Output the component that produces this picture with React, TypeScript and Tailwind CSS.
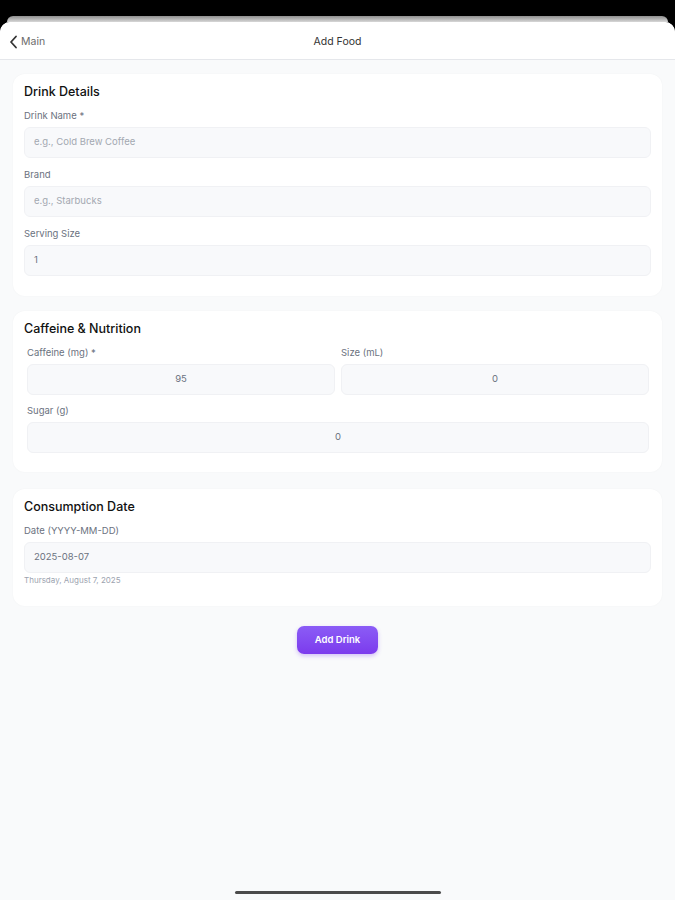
import React from "react";

function Field({ label, value, placeholder, center }: { label: string; value?: string; placeholder?: string; center?: boolean }) {
  return (
    <div className="flex flex-col">
      <div className="h-[12px] text-[9.5px] leading-[12px] text-[#6b7280] mb-[5px]">{label}</div>
      <div
        className={`h-[31px] rounded-[6px] bg-[#f8f9fb] border border-[#f0f1f4] flex items-center text-[9.5px] ${
          center ? "justify-center" : "px-[9px]"
        } ${value ? "text-[#6b7280]" : "text-[#a3a8b1]"}`}
      >
        {value ?? placeholder}
      </div>
    </div>
  );
}

function Card({ title, children, className }: { title: string; children: React.ReactNode; className?: string }) {
  return (
    <div className={`bg-white rounded-[12px] shadow-[0_0_2px_rgba(0,0,0,0.04)] pt-[10px] ${className ?? ""}`}>
      <div className="h-[16px] leading-[16px] text-[12.5px] font-medium text-[#111111] mb-[10px]">{title}</div>
      {children}
    </div>
  );
}

export default function App() {
  return (
    <div className="h-[900px] bg-black flex flex-col font-['Inter',sans-serif]">
      <div className="h-[16px] shrink-0" />
      <div className="mx-[7px] h-[6px] shrink-0 rounded-t-[10px] bg-gradient-to-b from-[#8f8f8f] to-[#d8d8d8]" />
      <div className="flex-1 bg-[#f9fafb] rounded-t-[10px] flex flex-col overflow-hidden">
        <div className="h-[38px] shrink-0 bg-white border-b border-[#e5e7eb] flex items-center relative pt-[2px]">
          <div className="flex items-center pl-[8px] gap-[2px]">
            <svg width="11" height="14" viewBox="0 0 11 14" fill="none">
              <path d="M8 1.5L3 7l5 5.5" stroke="#333333" strokeWidth="1.8" strokeLinecap="round" strokeLinejoin="round" />
            </svg>
            <span className="text-[10.5px] text-[#6b6b6b]">Main</span>
          </div>
          <div className="absolute left-0 right-0 text-center text-[10.5px] text-[#333333] pointer-events-none">Add Food</div>
        </div>

        <div className="flex flex-col px-[13px] pt-[14px]">
          <Card title="Drink Details" className="px-[11px] pb-[20px]">
            <div className="flex flex-col gap-[11px]">
              <Field label="Drink Name *" placeholder="e.g., Cold Brew Coffee" />
              <Field label="Brand" placeholder="e.g., Starbucks" />
              <Field label="Serving Size" value="1" />
            </div>
          </Card>

          <Card title="Caffeine & Nutrition" className="mt-[15px] pl-[11px] pr-[13px] pb-[19px]">
            <div className="flex flex-col gap-[10px] pl-[3px]">
              <div className="grid grid-cols-2 gap-[6px]">
                <Field label="Caffeine (mg) *" value="95" center />
                <Field label="Size (mL)" value="0" center />
              </div>
              <Field label="Sugar (g)" value="0" center />
            </div>
          </Card>

          <Card title="Consumption Date" className="mt-[17px] px-[11px] pb-[21px]">
            <Field label="Date (YYYY-MM-DD)" value="2025-08-07" />
            <div className="mt-[2px] text-[8px] leading-[10px] text-[#9ca3af]">Thursday, August 7, 2025</div>
          </Card>

          <div className="flex justify-center mt-[20px]">
            <button className="w-[81px] h-[28px] rounded-[7px] bg-gradient-to-b from-[#8b5cf6] to-[#7c3aed] text-white text-[9.5px] font-semibold shadow-[0_2px_4px_rgba(124,58,237,0.3)]">
              Add Drink
            </button>
          </div>
        </div>

        <div className="mt-auto flex justify-center pb-[6px]">
          <div className="w-[206px] h-[3px] rounded-full bg-[#4b4b4b]" />
        </div>
      </div>
    </div>
  );
}
